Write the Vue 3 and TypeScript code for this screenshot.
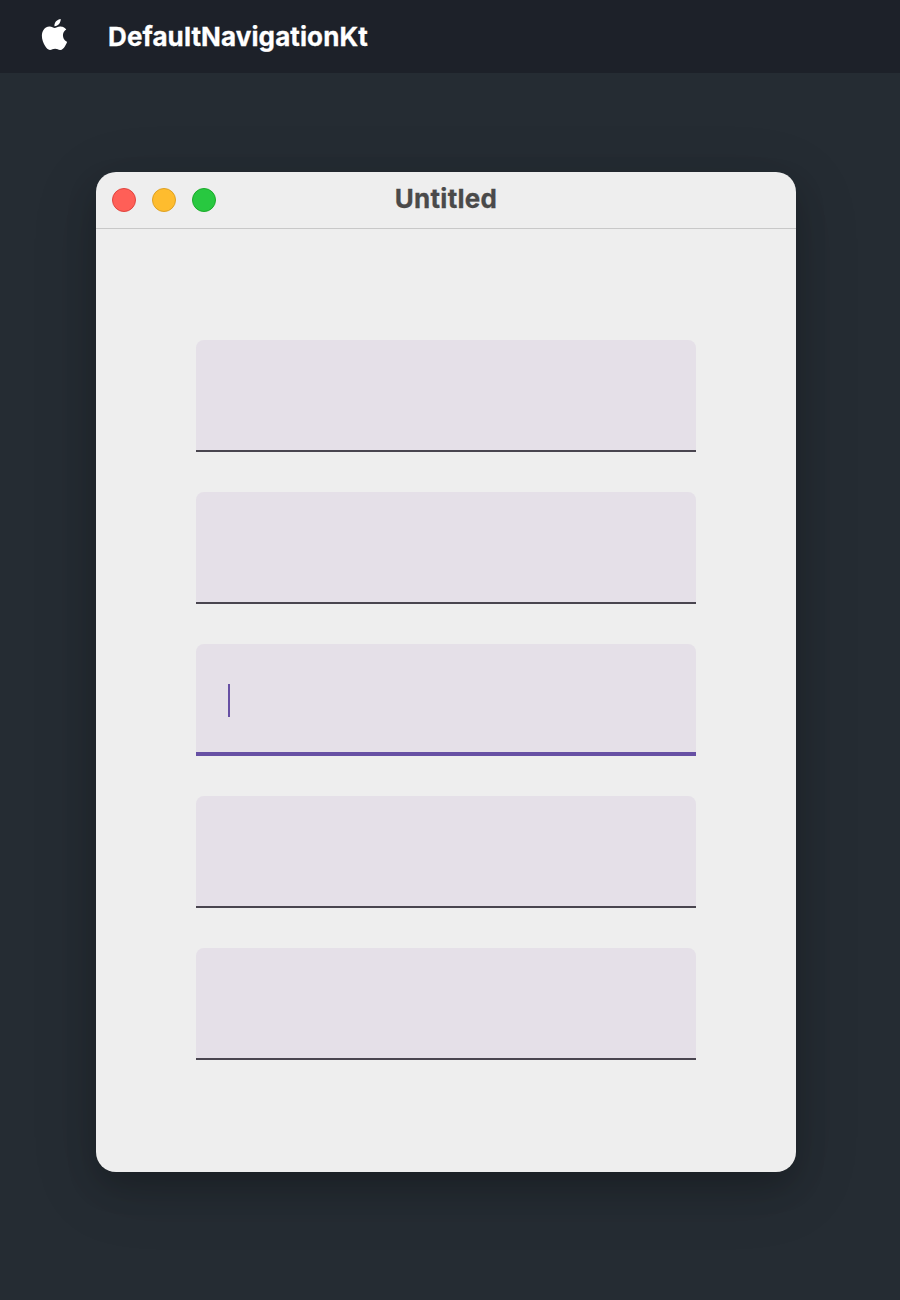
<script setup lang="ts">
const fields: { focused: boolean }[] = [
  { focused: false },
  { focused: false },
  { focused: true },
  { focused: false },
  { focused: false },
];
</script>

<template>
  <div class="desktop">
    <header class="menubar">
      <svg class="apple" viewBox="0 0 24 24" aria-hidden="true">
        <path
          fill="#ffffff"
          d="M12.152 6.896c-.948 0-2.415-1.078-3.96-1.04-2.04.027-3.91 1.183-4.961 3.014-2.117 3.675-.546 9.103 1.519 12.09 1.013 1.454 2.208 3.09 3.792 3.039 1.52-.065 2.09-.987 3.935-.987 1.831 0 2.35.987 3.96.948 1.637-.026 2.676-1.48 3.676-2.948 1.156-1.688 1.636-3.325 1.662-3.415-.039-.013-3.182-1.221-3.22-4.857-.026-3.04 2.48-4.494 2.597-4.559-1.429-2.09-3.623-2.324-4.39-2.376-2-.156-3.675 1.09-4.61 1.09zM15.53 3.83c.843-1.012 1.4-2.427 1.245-3.83-1.207.052-2.662.805-3.532 1.818-.78.896-1.454 2.338-1.273 3.714 1.338.104 2.715-.688 3.559-1.701"
        />
      </svg>
      <span class="app-name">DefaultNavigationKt</span>
    </header>

    <main class="stage">
      <section class="window">
        <div class="titlebar">
          <div class="lights">
            <span class="light red"></span>
            <span class="light yellow"></span>
            <span class="light green"></span>
          </div>
          <span class="title">Untitled</span>
        </div>
        <div class="content">
          <div
            v-for="(field, index) in fields"
            :key="index"
            class="field"
            :class="{ focused: field.focused }"
          >
            <span v-if="field.focused" class="caret"></span>
          </div>
        </div>
      </section>
    </main>
  </div>
</template>

<style>
html,
body {
  margin: 0;
  background: #252c33;
}
</style>

<style scoped>
.desktop {
  width: 900px;
  height: 1300px;
  overflow: hidden;
  display: flex;
  flex-direction: column;
  background: #252c33;
  font-family: Inter, "Liberation Sans", sans-serif;
}

.menubar {
  height: 73px;
  flex: none;
  display: flex;
  align-items: center;
  gap: 38px;
  padding-left: 39px;
  background: #1d2129;
}

.apple {
  width: 31px;
  height: 31px;
  margin-top: -4px;
  flex: none;
}

.app-name {
  color: #ffffff;
  font-size: 26px;
  font-weight: 700;
  line-height: 32px;
  letter-spacing: 0.1px;
  -webkit-text-stroke: 0.3px #ffffff;
}

.stage {
  flex: 1;
  padding: 99px 0 0 96px;
}

.window {
  width: 700px;
  height: 1000px;
  border-radius: 20px;
  display: flex;
  flex-direction: column;
  background: #eeeeee;
  box-shadow: 0 14px 30px rgba(0, 0, 0, 0.17), 0 16px 66px rgba(0, 0, 0, 0.16);
}

.titlebar {
  position: relative;
  height: 56px;
  flex: none;
  display: flex;
  align-items: center;
  justify-content: center;
  border-bottom: 1px solid #c8c8c8;
}

.lights {
  position: absolute;
  left: 16px;
  top: 16px;
  display: flex;
  gap: 16px;
}

.light {
  width: 24px;
  height: 24px;
  box-sizing: border-box;
  border-radius: 50%;
  border: 1px solid;
}

.red {
  background: #ff5f57;
  border-color: #e0443e;
}

.yellow {
  background: #febc2e;
  border-color: #dea123;
}

.green {
  background: #28c840;
  border-color: #1aab29;
}

.title {
  color: #4a4a4a;
  font-size: 26px;
  font-weight: 700;
  line-height: 32px;
  letter-spacing: 0.25px;
  margin-top: -2px;
  -webkit-text-stroke: 0.3px #4a4a4a;
}

.content {
  display: flex;
  flex-direction: column;
  gap: 40px;
  padding: 111px 100px 0;
}

.field {
  position: relative;
  height: 112px;
  box-sizing: border-box;
  border-radius: 8px 8px 0 0;
  border-bottom: 2px solid #49454f;
  background: #e5e0e8;
}

.field.focused {
  border-bottom: 4px solid #6750a4;
}

.caret {
  position: absolute;
  left: 32px;
  top: 40px;
  width: 2px;
  height: 33px;
  background: #6750a4;
}
</style>
